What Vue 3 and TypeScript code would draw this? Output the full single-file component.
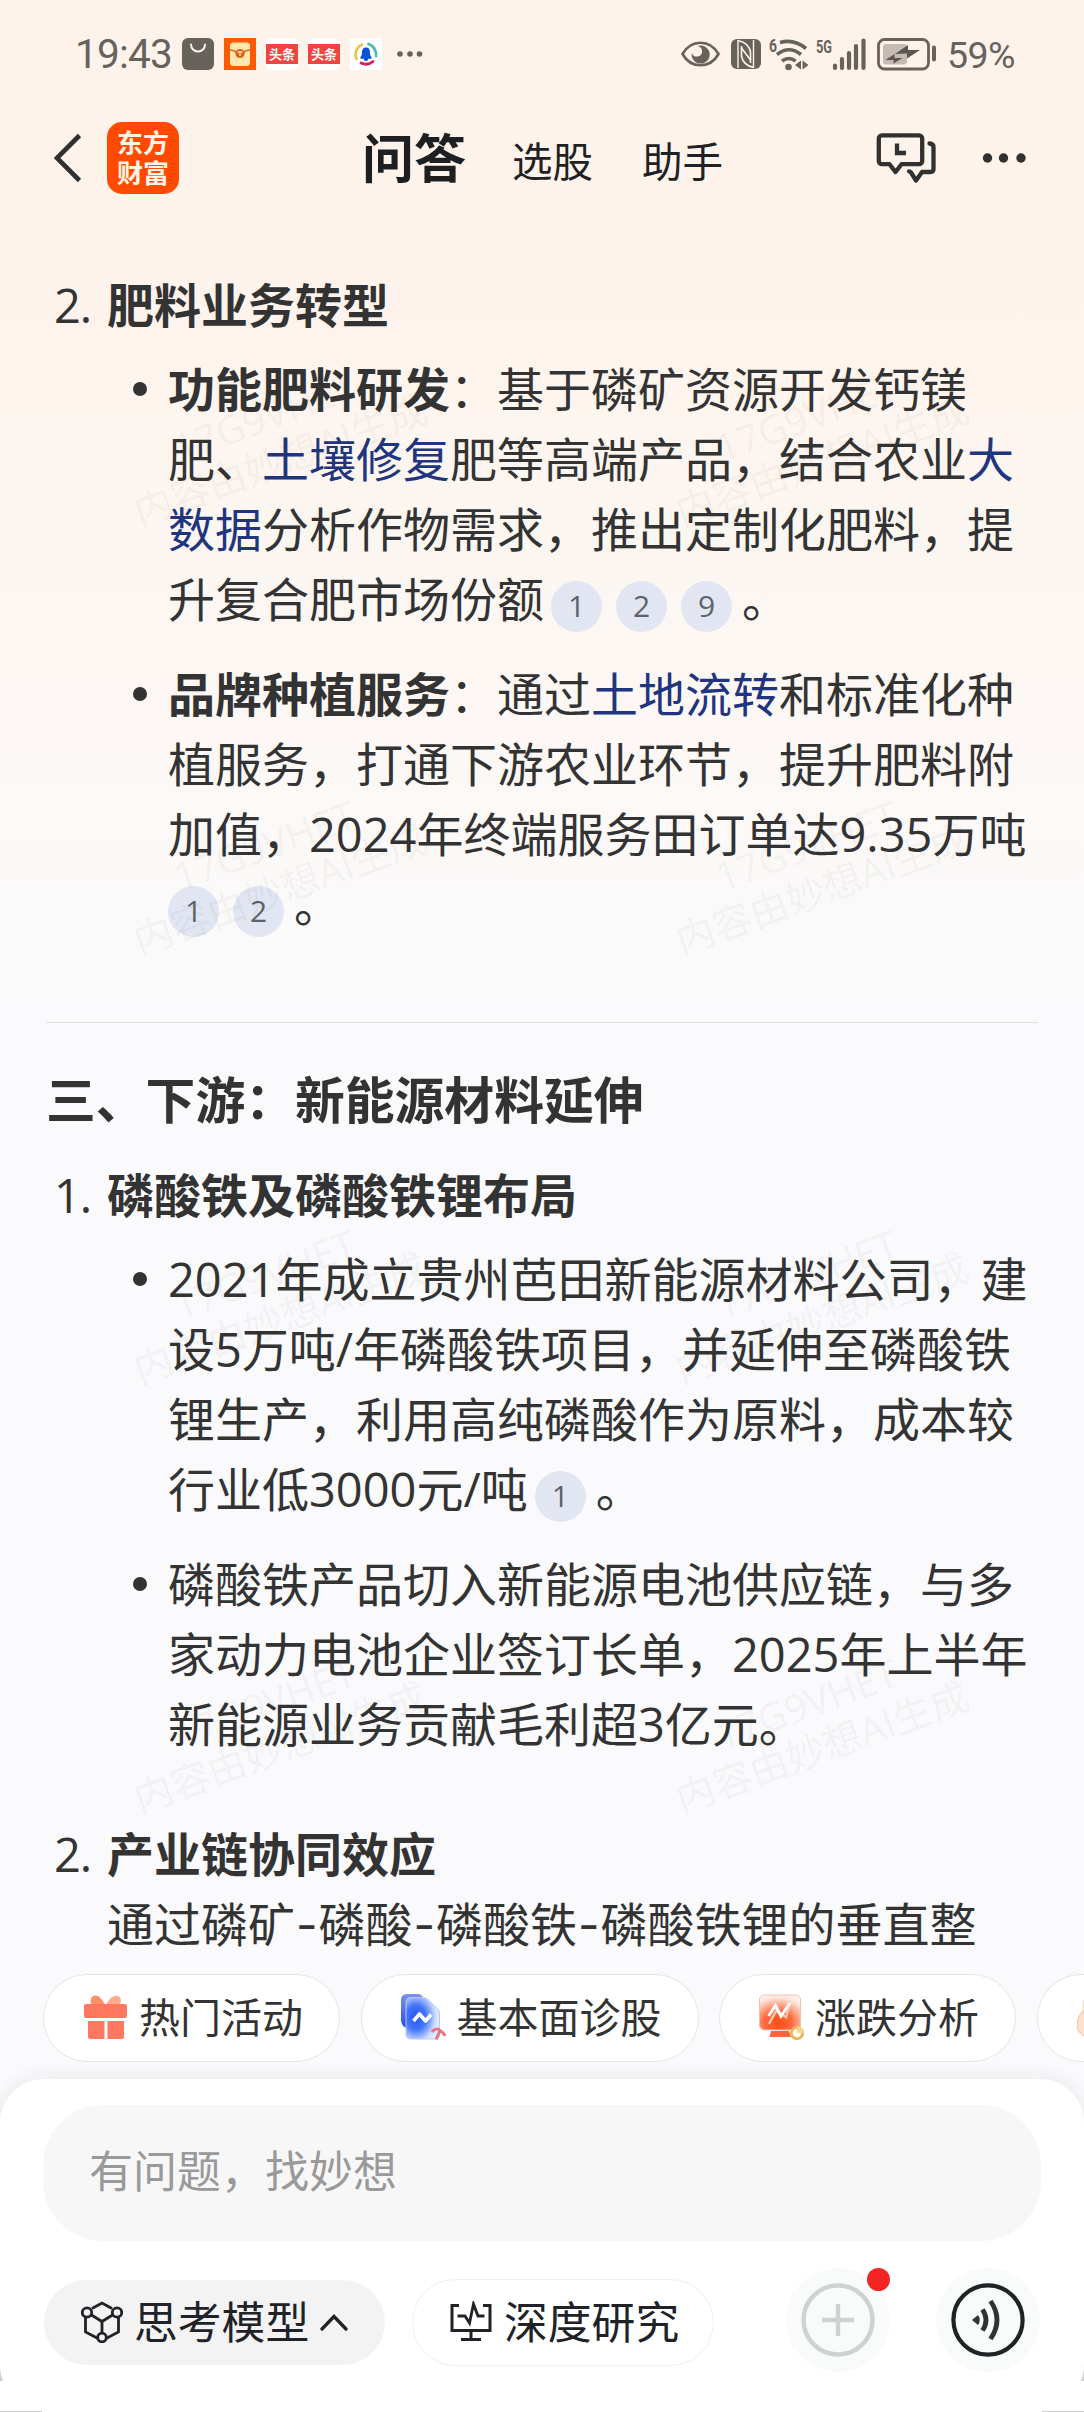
<script setup lang="ts">
import { computed } from 'vue'

interface Run {
  t: string
  kind?: 'bold' | 'link' | 'refs'
  refs?: number[]
}
type Line = Run[]
interface Chip {
  icon: 'gift' | 'doc' | 'screen' | 'flame'
  label: string
}

const fertilizer: Line[][] = [
  [
    [{ t: '功能肥料研发', kind: 'bold' }, { t: '：基于磷矿资源开发钙镁' }],
    [{ t: '肥、' }, { t: '土壤修复', kind: 'link' }, { t: '肥等高端产品，结合农业' }, { t: '大', kind: 'link' }],
    [{ t: '数据', kind: 'link' }, { t: '分析作物需求，推出定制化肥料，提' }],
    [{ t: '升复合肥市场份额' }, { t: '', kind: 'refs', refs: [1, 2, 9] }, { t: '。' }],
  ],
  [
    [{ t: '品牌种植服务', kind: 'bold' }, { t: '：通过' }, { t: '土地流转', kind: 'link' }, { t: '和标准化种' }],
    [{ t: '植服务，打通下游农业环节，提升肥料附' }],
    [{ t: '加值，2024年终端服务田订单达9.35万吨' }],
    [{ t: '', kind: 'refs', refs: [1, 2] }, { t: '。' }],
  ],
]

const phosphate: Line[][] = [
  [
    [{ t: '2021年成立贵州芭田新能源材料公司，建' }],
    [{ t: '设5万吨/年磷酸铁项目，并延伸至磷酸铁' }],
    [{ t: '锂生产，利用高纯磷酸作为原料，成本较' }],
    [{ t: '行业低3000元/吨' }, { t: '', kind: 'refs', refs: [1] }, { t: '。' }],
  ],
  [
    [{ t: '磷酸铁产品切入新能源电池供应链，与多' }],
    [{ t: '家动力电池企业签订长单，2025年上半年' }],
    [{ t: '新能源业务贡献毛利超3亿元。' }],
  ],
]

const chain: string[] = ['通过磷矿', '磷酸', '磷酸铁', '磷酸铁锂的垂直整']

const chips: Chip[] = [
  { icon: 'gift', label: '热门活动' },
  { icon: 'doc', label: '基本面诊股' },
  { icon: 'screen', label: '涨跌分析' },
  { icon: 'flame', label: '' },
]

const marks = computed(() =>
  [438, 867, 1296, 1725].flatMap((y) => [272, 814].map((x) => ({ x, y }))),
)
</script>

<template>
  <div class="app">
    <header class="status">
      <span class="time">19:43</span>
      <div class="notes">
        <svg width="32" height="32" viewBox="0 0 32 32">
          <rect width="32" height="32" rx="6" fill="#68625d" />
          <path d="M9 6.500a7 7 0 0 0 14 0" fill="none" stroke="#fdf3ea" stroke-width="2" stroke-linecap="round" />
        </svg>
        <svg width="32" height="32" viewBox="0 0 32 32">
          <rect width="32" height="32" fill="#fb5a06" />
          <rect x="6" y="4.500" width="20" height="23.500" rx="3.500" fill="#ffe8ae" />
          <path d="M6 12q4 0 7 3M26 12q-4 0-7 3" fill="none" stroke="#e06a25" stroke-width="1.500" />
          <circle cx="16" cy="15.500" r="4.600" fill="#e15a1c" />
          <path d="M13.500 14h5M16 14v4" stroke="#ffe8ae" stroke-width="1.400" />
        </svg>
        <span v-for="n in 2" :key="n" class="toutiao"><b>头条</b></span>
        <svg width="32" height="32" viewBox="0 0 32 32">
          <rect width="32" height="32" fill="#fff" />
          <g fill="none" stroke-width="2.800" stroke-linecap="round">
            <path d="M6.500 21A11 11 0 0 1 12 6.500" stroke="#ecc64b" />
            <path d="M18.500 6A11 11 0 0 1 26 18" stroke="#45bfa0" />
            <path d="M23 23.500A11 11 0 0 1 11 25" stroke="#d81e62" />
          </g>
          <path d="M16 9.500c3 0 4 2.300 4 5 0 2 .4 3.300 1.500 4.500v1.700h-3.300a2.200 2.200 0 0 1-4.400 0h-3.300V19c1.100-1.200 1.500-2.500 1.500-4.500 0-2.700 1-5 4-5z" fill="#0a55d5" />
        </svg>
        <svg class="more" width="26" height="32" viewBox="0 0 26 32" fill="#68625d">
          <circle cx="3" cy="16" r="2.800" /><circle cx="13" cy="16" r="2.800" /><circle cx="22.500" cy="16" r="2.800" />
        </svg>
      </div>
      <div class="signals">
        <svg width="39" height="32" viewBox="0 0 39 32">
          <path d="M1.500 16C10 1 29 1 37.500 16 29 31 10 31 1.500 16z" fill="none" stroke="#68625d" stroke-width="2.700" />
          <path d="M16.500 8.200a9 9 0 1 1-5.600 6.500 5.200 5.200 0 1 0 5.600-6.500z" fill="#68625d" />
        </svg>
        <svg class="nfc" width="30" height="32" viewBox="0 0 30 32">
          <rect y="1" width="30" height="30" rx="6" fill="#68625d" />
          <path d="M7 2v28M22.500 2v28" stroke="#fdf3ea" stroke-width="1.400" />
          <path d="M7 2.500Q18 5 19.500 14v11M22.500 29.500Q12 27 10.500 18V8" fill="none" stroke="#fdf3ea" stroke-width="1.600" />
          <path d="M10.500 10l9 12" stroke="#fdf3ea" stroke-width="1.600" fill="none" />
        </svg>
        <svg class="wifi" width="40" height="34" viewBox="0 0 40 34">
          <text class="tiny" x="0" y="15" textLength="8" lengthAdjust="spacingAndGlyphs">6</text>
          <g fill="none" stroke="#68625d" stroke-width="3.600">
            <path d="M11 5.500q14-4 26 6" /><path d="M8 17.500q12-9.500 24 0" /><path d="M13 24q7-5 13.500 0" />
          </g>
          <circle cx="19.500" cy="30" r="3.300" fill="#68625d" />
          <path d="M26 28l6-4.500v9zM33.500 23.500l6 4.500-6 4.500z" fill="#68625d" />
        </svg>
        <svg class="cell" width="51" height="34" viewBox="0 0 51 34">
          <text class="tiny" x="0" y="15.500" textLength="16" lengthAdjust="spacingAndGlyphs">5G</text>
          <path d="M19 28.500v2.500M26 22v9M33 16v15M40 9v22M47.500 3.500v27.500" stroke="#68625d" stroke-width="4.200" stroke-linecap="round" />
        </svg>
        <svg class="battery" width="60" height="34" viewBox="0 0 60 34">
          <rect x="1.500" y="2.500" width="50" height="29.500" rx="6" fill="none" stroke="#68625d" stroke-width="2.800" />
          <rect x="6" y="7" width="24" height="20.500" rx="3" fill="#c5bbb4" />
          <path d="M18 17l13-9v5h12l-13 8.500v-5zM8.500 23l9-6v4h8l-9 5.500v-3.500z" fill="#5b5651" />
          <path d="M57 10.500v12" stroke="#68625d" stroke-width="4" stroke-linecap="round" />
        </svg>
        <span class="percent">59%</span>
      </div>
    </header>

    <nav class="nav">
      <svg class="back" width="28" height="50" viewBox="0 0 28 50">
        <path d="M25.500 2.500L3 25l22.500 22.500" fill="none" stroke="#2e2f2f" stroke-width="4.600" />
      </svg>
      <div class="logo">东方<br />财富</div>
      <div class="tabs">
        <b>问答</b><span>选股</span><span>助手</span>
      </div>
      <svg class="history" width="60" height="52" viewBox="0 0 60 52" fill="none" stroke="#303130" stroke-width="4.300" stroke-linejoin="round" stroke-linecap="round">
        <path d="M6 3.300H43a3.200 3.200 0 0 1 3.200 3.200V29a3.200 3.200 0 0 1-3.200 3.200H25.500L19.500 40l-6-7.800H6A3.200 3.200 0 0 1 2.800 29V6.500A3.200 3.200 0 0 1 6 3.300z" />
        <path d="M53.500 11.500q4 .3 4 3.500V37q0 3-3 3H46l-6 8.500-5-8q-.8-1.200-2-1.200" />
        <path d="M21 11.500v9.500h9" stroke-linejoin="miter" stroke-linecap="butt" />
      </svg>
      <svg class="dots" width="44" height="12" viewBox="0 0 44 12" fill="#303130">
        <circle cx="5.500" cy="6" r="4.700" /><circle cx="21.500" cy="6" r="4.700" /><circle cx="39" cy="6" r="4.700" />
      </svg>
    </nav>

    <main class="answer">
      <section class="item">
        <div class="title"><i>2.</i><b>肥料业务转型</b></div>
        <ul>
          <li v-for="(para, p) in fertilizer" :key="p">
            <div v-for="(line, l) in para" :key="l" class="line">
              <template v-for="(run, r) in line" :key="r">
                <span v-if="run.kind === 'refs'" class="refs" :class="{ lead: r === 0 }"><em v-for="n in run.refs" :key="n">{{ n }}</em></span>
                <span v-else :class="run.kind">{{ run.t }}</span>
              </template>
            </div>
          </li>
        </ul>
      </section>

      <hr />
      <h2>三、下游：新能源材料延伸</h2>

      <section class="item">
        <div class="title"><i>1.</i><b>磷酸铁及磷酸铁锂布局</b></div>
        <ul>
          <li v-for="(para, p) in phosphate" :key="p">
            <div v-for="(line, l) in para" :key="l" class="line">
              <template v-for="(run, r) in line" :key="r">
                <span v-if="run.kind === 'refs'" class="refs"><em v-for="n in run.refs" :key="n">{{ n }}</em></span>
                <span v-else :class="run.kind">{{ run.t }}</span>
              </template>
            </div>
          </li>
        </ul>
      </section>

      <section class="item last">
        <div class="title"><i>2.</i><b>产业链协同效应</b></div>
        <div class="plain"><template v-for="(part, k) in chain" :key="k"><span v-if="k" class="dash">-</span>{{ part }}</template></div>
      </section>
    </main>

    <div class="chips">
      <button v-for="chip in chips" :key="chip.icon" class="chip" type="button">
        <svg v-if="chip.icon === 'gift'" width="46" height="46" viewBox="0 0 46 46">
          <path d="M22 11C18 2 12-.500 9 3c-2.500 3-1.500 6 0 8z" fill="#fc9167" />
          <path d="M23 11c3-8 10-11.500 13.500-8 2.300 2.600 1.300 6 0 8z" fill="#feac8e" />
          <rect x="1" y="10" width="43" height="14" rx="2" fill="#fd785f" />
          <path d="M5 27h16.500v18H7a2 2 0 0 1-2-2zM24.500 27H41v16a2 2 0 0 1-2 2H24.500z" fill="#fd785f" />
        </svg>
        <svg v-else-if="chip.icon === 'doc'" width="46" height="46" viewBox="0 0 46 46">
          <defs>
            <radialGradient id="docFill" cx=".3" cy=".48" r=".75">
              <stop offset="0" stop-color="#1f57f7" /><stop offset=".4" stop-color="#4675fa" /><stop offset=".8" stop-color="#d4e3fd" /><stop offset="1" stop-color="#e6f1ff" />
            </radialGradient>
            <linearGradient id="docBack" x1="0" y1="0" x2="0" y2="1"><stop offset="0" stop-color="#8090ee" /><stop offset="1" stop-color="#274cf0" /></linearGradient>
          </defs>
          <path d="M6 0h11q3 0 5 3v31H5Q0 31 0 26V6Q0 0 6 0z" fill="url(#docBack)" />
          <path d="M10 3.500h12q3 0 5 2l9.500 9q2 2 2 5V40q0 5-5 5H10q-5 0-5-5V8.500q0-5 5-5z" fill="url(#docFill)" stroke="#b9c9f2" stroke-width="1" />
          <path d="M12.500 27l6-7 6 7 5.500-6.500" fill="none" stroke="#fff" stroke-width="3.600" stroke-linejoin="round" />
          <path d="M31 38q4-5 8-1.500 4 2 5 5.500M39 37l-4 8.500" fill="none" stroke="#e57580" stroke-width="3" />
        </svg>
        <svg v-else-if="chip.icon === 'screen'" width="46" height="46" viewBox="0 0 46 46">
          <defs>
            <radialGradient id="scrFill" cx=".45" cy=".8" r=".85">
              <stop offset="0" stop-color="#fd4d18" /><stop offset=".4" stop-color="#fd6a3c" /><stop offset=".85" stop-color="#fde4dc" /><stop offset="1" stop-color="#fff2ee" />
            </radialGradient>
          </defs>
          <rect x=".5" y="1" width="41" height="35" rx="5" fill="url(#scrFill)" stroke="#f2bdb0" />
          <path d="M12 37h18l2 6H10.500z" fill="#f5683b" />
          <path d="M10 30l7-13 10 6 4-13" fill="none" stroke="#ffc3ae" stroke-width="2.500" />
          <path d="M9.500 22l7-10.500L22 22l9-13" fill="none" stroke="#fff" stroke-width="3" />
          <circle cx="38" cy="39" r="5.700" fill="#fff" stroke="#ebb35a" stroke-width="2.800" />
          <path d="M38 39v-7a7 7 0 0 1 7 7z" fill="#f7d58b" />
        </svg>
        <svg v-else width="46" height="46" viewBox="0 0 46 46">
          <path d="M14 9C4 17 0 24 0 31c0 8 8 14 18 14h10V6z" fill="#fee0d1" stroke="#f8b99f" />
          <path d="M7 6q-3 12 3 20" fill="#ffead5" stroke="#fbd3a8" />
        </svg>
        <span v-if="chip.label">{{ chip.label }}</span>
      </button>
    </div>

    <footer class="panel">
      <div class="input">有问题，找妙想</div>
      <div class="tools">
        <button class="tool filled" type="button">
          <svg width="42" height="42" viewBox="0 0 42 42" fill="none" stroke="#212227" stroke-width="2.800">
            <path d="M11 7.500L21 2l10 5.500M4.500 16v15L17 37.500M37.500 16v15L25 37.500M10.500 14L21 20.500 31.500 14M21 20.500V32" />
            <circle cx="6" cy="11.500" r="4.700" /><circle cx="36" cy="11.500" r="4.700" /><circle cx="21" cy="36.500" r="4.300" />
          </svg>
          <span>思考模型</span>
          <svg class="up" width="28" height="18" viewBox="0 0 28 18"><path d="M2 16L14 3.500 26 16" fill="none" stroke="#212227" stroke-width="3.300" stroke-linecap="round" /></svg>
        </button>
        <button class="tool outlined" type="button">
          <svg width="42" height="42" viewBox="0 0 42 42" fill="none" stroke="#212227" stroke-width="3">
            <path d="M9 4.500H2V29.500H40V4.500H33M21 30v8.500M11 38.500H31" />
            <path d="M7.500 15H15l4.500 7L23.500 3l4.500 12h6.500" stroke-width="2.800" />
          </svg>
          <span>深度研究</span>
        </button>
        <div class="round add">
          <svg width="104" height="104" viewBox="0 0 104 104" fill="none" stroke="#d0d2d1" stroke-width="4.500">
            <circle cx="52" cy="52" r="34.500" /><path d="M36 52h32M52 36v32" />
          </svg>
          <i class="badge" />
        </div>
        <div class="round">
          <svg width="104" height="104" viewBox="0 0 104 104" fill="none" stroke="#202226" stroke-width="4.200">
            <circle cx="52" cy="52" r="34.600" />
            <path d="M36 52l6-5q3.500 5 0 10z" fill="#303234" stroke="none" />
            <path d="M46.500 41.500q7 10.500 0 21M54.500 33q13 19 0 38" stroke="#303234" stroke-width="4.800" />
          </svg>
        </div>
      </div>
    </footer>

    <div class="marks" aria-hidden="true">
      <div v-for="(m, i) in marks" :key="i" class="mark" :style="{ left: m.x + 'px', top: m.y + 'px' }">17G9VHET<br />内容由妙想AI生成</div>
    </div>
    <svg class="corners" width="1084" height="56" viewBox="0 0 1084 56" fill="#cfcfcf">
      <path d="M0 10Q.500 20 3 25H0zM1084 10q-.500 10-3 15h3zM0 55h42v1H0zM1042 55h42v1h-42z" />
    </svg>
  </div>
</template>

<style>
body {
  margin: 0;
}
</style>

<style scoped>
.app {
  position: relative;
  display: flex;
  flex-direction: column;
  width: 1084px;
  height: 2412px;
  overflow: hidden;
  color: #333;
  font-family: 'Open Sans', 'Noto Sans CJK SC', sans-serif;
  background: linear-gradient(#fdf3ea 0, #fef4ed 340px, #fcf6f1 520px, #fdf8f5 740px, #fafafa 940px, #fafafc 1000px);
}
svg {
  display: block;
  flex: none;
}
.status {
  display: flex;
  align-items: center;
  height: 108px;
  padding: 0 66px 0 75px;
  color: #68625d;
  box-sizing: border-box;
}
.time {
  width: 107px;
  font: 40.5px/56px Roboto, sans-serif;
  letter-spacing: -0.8px;
}
.notes {
  display: flex;
  gap: 10px;
}
.more {
  margin-left: 5px;
}
.toutiao {
  display: flex;
  align-items: center;
  width: 32px;
  height: 32px;
  background: #fff;
  border-radius: 6px;
}
.toutiao b {
  width: 32px;
  height: 20px;
  background: #f04440;
  color: #fff;
  font-size: 13px;
  line-height: 20px;
  text-align: center;
}
.signals {
  display: flex;
  align-items: center;
  margin-left: auto;
}
.nfc {
  margin-left: 11px;
}
.wifi {
  margin-left: 8px;
}
.cell {
  margin-left: 7px;
}
.battery {
  margin-left: 10px;
}
.tiny {
  font: bold 18px Roboto, sans-serif;
  fill: #68625d;
}
.percent {
  width: 71px;
  margin-left: 10px;
  padding-top: 2px;
  font: 37.5px/56px Roboto, sans-serif;
  letter-spacing: -0.6px;
  white-space: nowrap;
}
.nav {
  display: flex;
  align-items: center;
  height: 100px;
  padding: 0 58px 0 54px;
}
.logo {
  width: 72px;
  height: 72px;
  margin-left: 25px;
  padding-top: 6px;
  box-sizing: border-box;
  border-radius: 15px;
  background: #ff4a00;
  color: #fff6e8;
  font-weight: 700;
  font-size: 26px;
  line-height: 30px;
  text-align: center;
}
.tabs {
  display: flex;
  align-items: center;
  margin-left: 183px;
  color: #1f2123;
  line-height: 70px;
}
.tabs b {
  font-size: 52px;
  color: #1d1f21;
}
.tabs span {
  margin: 8px 0 0 49px;
  font-size: 40.5px;
}
.tabs b + span {
  margin-left: 46px;
}
.history {
  margin: 0 0 0 auto;
}
.dots {
  margin-left: 46px;
}
.answer {
  flex: none;
  height: 1766px;
  padding: 62px 46px 0;
  box-sizing: border-box;
  overflow: hidden;
  font-size: 47px;
  line-height: 70px;
  white-space: nowrap;
}
.title {
  display: flex;
  height: 70px;
}
.title i {
  width: 53px;
  padding-left: 8px;
  font-style: normal;
  letter-spacing: -1px;
}
ul {
  display: flex;
  flex-direction: column;
  gap: 25px;
  margin: 14px 0 0;
  padding: 0 0 0 122px;
  list-style: none;
}
li {
  position: relative;
}
li::before {
  content: '';
  position: absolute;
  left: -35px;
  top: 28px;
  width: 14px;
  height: 14px;
  border-radius: 50%;
  background: #333;
}
.line {
  display: flex;
  align-items: baseline;
  height: 70px;
}
.bold {
  font-weight: 700;
}
.link {
  color: #21357f;
}
.refs {
  display: inline-flex;
  gap: 14px;
  margin: 0 10px 0 7px;
}
.refs.lead {
  margin-left: 0;
}
.refs em {
  width: 51px;
  height: 51px;
  border-radius: 50%;
  background: #e1e6f2;
  color: #606268;
  font-size: 30px;
  font-style: normal;
  line-height: 50px;
  text-align: center;
}
hr {
  height: 1px;
  margin: 83px 0 42px;
  border: 0;
  background: #dedede;
}
h2 {
  height: 70px;
  margin: 0 0 25px;
  font-size: 49.8px;
  line-height: 70px;
}
.last {
  margin-top: 60px;
}
.plain {
  padding-left: 61px;
}
.dash {
  display: inline-block;
  width: 23.5px;
  font-family: Inter, sans-serif;
  text-align: center;
}
.chips {
  display: flex;
  gap: 20.5px;
  flex: none;
  height: 88px;
  padding-left: 43px;
}
.chip {
  display: flex;
  flex: none;
  align-items: center;
  gap: 10px;
  height: 88px;
  padding: 0 36px 2px 39px;
  box-sizing: border-box;
  border: 1.5px solid #e5e5e7;
  border-radius: 44px;
  background: #fff;
  color: #333;
  font-family: inherit;
  font-size: 41px;
  line-height: 60px;
  white-space: nowrap;
}
.panel {
  flex: 1;
  margin-top: 17px;
  padding: 26px 43px 0;
  border-radius: 44px 44px 0 0;
  background: #fff;
  box-shadow: 0 0 22px rgba(30, 30, 50, 0.09);
}
.input {
  height: 136px;
  padding-left: 46px;
  border-radius: 60px;
  background: #f7f7f7;
  color: #999;
  font-size: 44px;
  line-height: 133px;
}
.tools {
  display: flex;
  align-items: center;
  height: 104px;
  margin-top: 27px;
}
.tool {
  display: flex;
  align-items: center;
  height: 87px;
  margin-top: 4px;
  padding: 0;
  box-sizing: border-box;
  border: 1.5px solid #efefef;
  border-radius: 44px;
  background: #fff;
  color: #202227;
  font-family: inherit;
  font-size: 43.8px;
  line-height: 60px;
  white-space: nowrap;
}
.tool span {
  margin-left: 12px;
}
.filled {
  width: 341px;
  height: 85px;
  margin-left: 1px;
  padding-left: 37px;
  border: 0;
  background: #f3f3f3;
}
.filled span {
  margin-left: 11px;
}
.up {
  margin-left: 11px;
}
.outlined {
  width: 302px;
  margin-left: 27px;
  padding-left: 37px;
}
.round {
  position: relative;
  width: 104px;
  height: 104px;
  margin-left: 46px;
  border-radius: 50%;
  background: #f9fbfa;
}
.add {
  margin-left: 72px;
}
.badge {
  position: absolute;
  left: 81px;
  top: 0;
  width: 23px;
  height: 23px;
  border-radius: 50%;
  background: #f22424;
}
.marks {
  position: absolute;
  inset: 0;
  pointer-events: none;
}
.mark {
  position: absolute;
  color: rgba(0, 0, 0, 0.055);
  font-size: 39px;
  line-height: 46px;
  text-align: center;
  white-space: nowrap;
  transform: translate(-50%, -50%) rotate(-20deg);
}
.corners {
  position: absolute;
  left: 0;
  bottom: 0;
}
</style>
